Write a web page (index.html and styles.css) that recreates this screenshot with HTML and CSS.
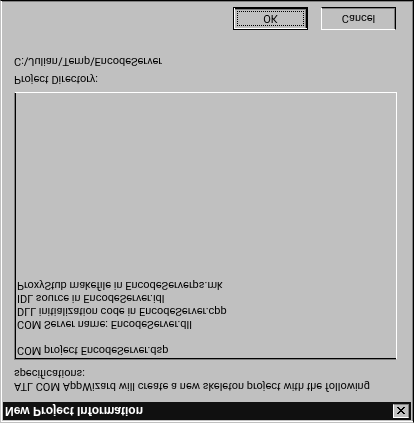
FILE: index.html
```html
<!DOCTYPE html>
<html lang="en">
<head>
<meta charset="utf-8">
<title>New Project Information</title>
<link rel="stylesheet" href="styles.css">
</head>
<body>
<main class="dialog">
  <header class="titlebar">
    <h1 class="title">New Project Information</h1>
    <button class="close" type="button" aria-label="Close"><svg width="8" height="7" viewBox="0 0 8 7" shape-rendering="crispEdges"><path d="M0 0h2v1h1v1h2V1h1V0h2v1H7v1H6v1H5v1h1v1h1v1h1v1H6V6H5V5H3v1H2v1H0V6h1V5h1V4h1V3H2V2H1V1H0z" fill="#000"/></svg></button>
  </header>
  <div class="content">
    <p class="intro">ATL COM AppWizard will create a new skeleton project with the following specifications:</p>
    <section class="summary">
      <p>COM project EncodeServer.dsp</p>
      <p class="gap">COM Server name: EncodeServer.dll</p>
      <p>DLL initialization code in EncodeServer.cpp</p>
      <p>IDL source in EncodeServer.idl</p>
      <p>ProxyStub makefile in EncodeServerps.mk</p>
    </section>
    <p class="label">Project Directory:</p>
    <p class="path">C:\Julian\Temp\EncodeServer</p>
    <footer class="actions">
      <button class="button default" type="button"><span class="focus">OK</span></button>
      <button class="button" type="button">Cancel</button>
    </footer>
  </div>
</main>
</body>
</html>
```

FILE: styles.css
```css
* { box-sizing: border-box; }
body {
  margin: 0;
  background: #c0c0c0;
  color: #000;
  font: 11px/13px Roboto, "Liberation Sans", Arial, sans-serif;
}
p, h1 { margin: 0; }
.dialog {
  display: flex;
  flex-direction: column;
  min-height: 100vh;
  padding: 2px 2px 0;
  border: 1px solid;
  border-color: #c0c0c0 #000 #000 #c0c0c0;
  box-shadow: inset 1px 1px #fff, inset -1px -1px #808080;
  transform: scaleY(-1);
}
.titlebar {
  display: flex;
  align-items: center;
  justify-content: space-between;
  height: 18px;
  padding: 0 2px;
  background: #101010;
  color: #fff;
}
.title { font: bold 12px/14px "Liberation Sans", Arial, sans-serif; }
.button, .close {
  border: 1px solid;
  border-color: #fff #000 #000 #fff;
  box-shadow: inset -1px -1px #808080;
  background: #c0c0c0;
  color: #000;
  font: inherit;
}
.close {
  display: grid;
  place-items: center;
  width: 16px;
  height: 14px;
  padding: 0;
  border-color: #fff #808080 #808080 #fff;
  box-shadow: none;
}
.content {
  display: flex;
  flex: 1;
  flex-direction: column;
  padding: 9px 14px 6px 11px;
}
.intro { max-width: 360px; }
.summary {
  flex: 1;
  margin-top: 7px;
  padding: 2px;
  border: 1px solid;
  border-color: #808080 #fff #fff #808080;
  box-shadow: inset 1px 1px #000;
}
.gap { margin-top: 13px; }
.label { margin-top: 6px; }
.path { margin-top: 5px; }
.actions {
  display: flex;
  justify-content: flex-end;
  gap: 13px;
  margin-top: 25px;
  padding-right: 1px;
}
.button { width: 75px; height: 23px; padding: 0; }
.default {
  padding: 2px;
  border-color: #000;
  box-shadow: inset 1px 1px #fff, inset -1px -1px #000, inset -2px -2px #808080;
}
.focus {
  display: grid;
  place-items: center;
  height: 15px;
  margin: 0 1px;
  border: 1px dotted #000;
}
```
